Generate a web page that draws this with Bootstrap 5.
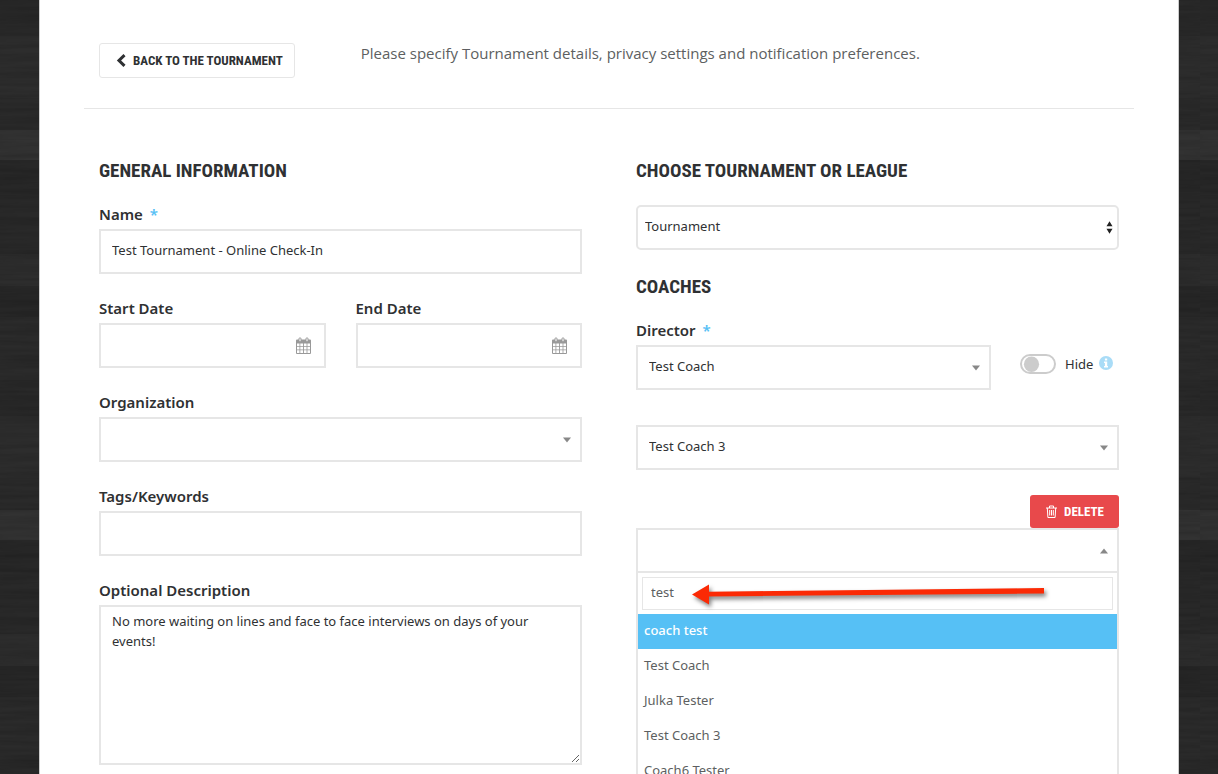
<!DOCTYPE html>
<html lang="en">
<head>
<meta charset="utf-8">
<meta name="viewport" content="width=device-width, initial-scale=1">
<title>Tournament settings</title>
<link rel="stylesheet" href="https://cdn.jsdelivr.net/npm/bootstrap@5.3.0/dist/css/bootstrap.min.css">
<style>
  :root { --ink: #2f3133; --line: #e6e6e6; --sky: #56c0f5; --danger: #e8494b; }
  html { scrollbar-width: none; }
  body {
    font-family: "Noto Sans", sans-serif; font-size: 13px; line-height: 20px; color: var(--ink);
    background-color: #272727;
    background-image:
      url("data:image/svg+xml,%3Csvg xmlns='http://www.w3.org/2000/svg' width='400' height='400'%3E%3Cfilter id='g'%3E%3CfeTurbulence type='fractalNoise' baseFrequency='.012 .22' numOctaves='3' stitchTiles='stitch'/%3E%3CfeColorMatrix values='0 0 0 0 0 0 0 0 0 0 0 0 0 0 0 .8 0 0 0 -.22'/%3E%3C/filter%3E%3Crect width='400' height='400' filter='url(%23g)' opacity='.3'/%3E%3C/svg%3E"),
      linear-gradient(#292929 0 36px, #2d2d2d 36px 98px, #2a2a2a 98px 130px, #323232 130px 160px, #272727 160px 192px, #292929 192px 254px, #2d2d2d 254px 286px, #272727 286px 317px, #2b2b2b 317px 380px);
    background-size: 400px 400px, 100% 380px;
  }
  .sheet { background: #fff; min-height: 100vh; padding: 43px 44px 40px; border-left: 1px solid #ccc; border-right: 1px solid #ccc; }
  .intro { padding: 0 15px 30px; border-bottom: 1px solid var(--line); margin-bottom: 47px; }
  .intro p { font-family: "Open Sans", "Noto Sans", sans-serif; font-size: 15px; color: #5d5f61; margin-left: 66px; }
  .poster { font-family: "Roboto Condensed", Roboto, sans-serif; font-weight: 700; text-transform: uppercase; }
  h2.poster { font-size: 19px; line-height: 30px; margin: 0 0 19px; }
  .btn.poster { font-size: 13px; line-height: 19px; border-radius: 3px; padding: 7px 11px 7px 16px; gap: 7px; }
  .btn-back { border: 1px solid var(--line); color: var(--ink); }
  .btn.btn-del { background: var(--danger); color: #fff; padding-right: 15px; }
  .cols { padding: 0 15px; }
  .cols > .row { --bs-gutter-x: 54px; }
  .row.pair { --bs-gutter-x: 30px; }
  .field { margin-bottom: 25px; }
  .field > label, .field-label { display: block; font-size: 15px; font-weight: 600; line-height: 18px; padding-bottom: 6px; }
  .req { color: var(--sky); margin-left: 3px; }
  .form-control.box, .form-select.box {
    font-size: 13px; line-height: 20px; color: var(--ink); height: 45px; border: 2px solid var(--line);
    border-radius: 0; padding: 8px 11px 12px; background-color: #fff;
  }
  .form-select.box {
    padding: 8px 30px 12px 11px; background-size: 8px 6px; background-position: right 9px top 18px;
    background-image: url("data:image/svg+xml,%3Csvg xmlns='http://www.w3.org/2000/svg' viewBox='0 0 8 6'%3E%3Cpath d='M0 .5h8L4 5.5z' fill='%23888'/%3E%3C/svg%3E");
  }
  .form-select.opened { text-align: left; background-image: url("data:image/svg+xml,%3Csvg xmlns='http://www.w3.org/2000/svg' viewBox='0 0 8 6'%3E%3Cpath d='M0 5.5h8L4 .5z' fill='%23888'/%3E%3C/svg%3E"); }
  .form-select.native {
    border-radius: 5px; padding-left: 7px; background-size: 7px 13px; background-position: right 4px top 14px; margin-bottom: 22px;
    background-image: url("data:image/svg+xml,%3Csvg xmlns='http://www.w3.org/2000/svg' viewBox='0 0 7 13'%3E%3Cpath d='M.5 5.3h6L3.500 .3zM.5 7.700h6l-3 5z' fill='%23222'/%3E%3C/svg%3E");
  }
  .form-control.area { height: 160px; padding: 4px 11px; }
  .cal { position: absolute; right: 15px; top: 14px; pointer-events: none; }
  .director { width: 355px; max-width: 74%; }
  .second { margin-top: 35px; }
  .remove-row { padding-top: 25px; }
  .toggle .form-check-input { width: 36px; height: 20px; margin: 0; border: 2px solid #ccc; background-size: 19px; flex: none;
    background-image: url("data:image/svg+xml,%3Csvg xmlns='http://www.w3.org/2000/svg' viewBox='-4 -4 8 8'%3E%3Ccircle r='3.2' fill='%23ccc'/%3E%3C/svg%3E"); }
  .toggle { padding: 9px 0 0 29px; height: 45px; }
  .toggle label { margin: 0 6px 0 9px; }
  .toggle svg { margin-top: 2px; }
  .results { border: 2px solid var(--line); border-top: 0; }
  .find { padding: 4px; }
  .find .form-control { height: 33px; font-size: 13px; color: #5d5f61; border: 1px solid var(--line); border-radius: 0; padding: 4px 8px 8px; }
  .results .list-group-item { border: 0; padding: 6px 6px 9px; color: #5d5f61; line-height: 20px; }
  .results .list-group-item.active { background: var(--sky); color: #fff; font-weight: 500; }
  .pointer { position: absolute; left: 54px; top: 7px; pointer-events: none; filter: drop-shadow(2px 3px 2px rgba(0,0,0,.5)); }
</style>
</head>
<body>
<main class="container-xl sheet">
  <header class="intro d-flex align-items-start">
    <a href="#" class="btn poster btn-back d-flex align-items-center">
      <svg width="10" height="13" viewBox="0 0 10 13" fill="none" stroke="currentColor" stroke-width="3"><path d="M8.500 1.200 3 6.500l5.500 5.300"/></svg>
      Back to the tournament
    </a>
    <p class="mb-0">Please specify Tournament details, privacy settings and notification preferences.</p>
  </header>

  <div class="cols">
  <form class="row">
    <section class="col-6">
      <h2 class="poster">General information</h2>
      <div class="field">
        <label for="name">Name <span class="req">*</span></label>
        <input id="name" class="form-control box" value="Test Tournament - Online Check-In">
      </div>
      <div class="row pair">
        <div class="col-6 field">
          <label for="start">Start Date</label>
          <div class="position-relative">
            <input id="start" class="form-control box">
            <svg class="cal" width="15" height="17" viewBox="0 0 15 17"><path fill="#999" d="M1 2.500h13a1 1 0 0 1 1 1v12.500a1 1 0 0 1-1 1H1a1 1 0 0 1-1-1V3.500a1 1 0 0 1 1-1z"/><path fill="#fff" d="M1 6.500h2.500v2.500H1zM4.300 6.500h2.700v2.500H4.300zM7.900 6.500h2.700v2.500H7.900zM11.400 6.500H14v2.500h-2.600zM1 9.800h2.500v2.700H1zM4.300 9.800h2.700v2.700H4.300zM7.900 9.800h2.700v2.700H7.900zM11.400 9.800H14v2.700h-2.600zM1 13.300h2.500V16H1zM4.300 13.300h2.700V16H4.300zM7.900 13.300h2.700V16H7.900zM11.400 13.300H14V16h-2.600z"/><g fill="#fff" stroke="#999"><rect x="3" y=".8" width="2" height="4" rx="1"/><rect x="10" y=".8" width="2" height="4" rx="1"/></g></svg>
          </div>
        </div>
        <div class="col-6 field">
          <label for="end">End Date</label>
          <div class="position-relative">
            <input id="end" class="form-control box">
            <svg class="cal" width="15" height="17" viewBox="0 0 15 17"><path fill="#999" d="M1 2.500h13a1 1 0 0 1 1 1v12.500a1 1 0 0 1-1 1H1a1 1 0 0 1-1-1V3.500a1 1 0 0 1 1-1z"/><path fill="#fff" d="M1 6.500h2.500v2.500H1zM4.300 6.500h2.700v2.500H4.300zM7.900 6.500h2.700v2.500H7.900zM11.400 6.500H14v2.500h-2.600zM1 9.800h2.500v2.700H1zM4.300 9.800h2.700v2.700H4.300zM7.900 9.800h2.700v2.700H7.900zM11.400 9.800H14v2.700h-2.600zM1 13.300h2.500V16H1zM4.300 13.300h2.700V16H4.300zM7.900 13.300h2.700V16H7.900zM11.400 13.300H14V16h-2.600z"/><g fill="#fff" stroke="#999"><rect x="3" y=".8" width="2" height="4" rx="1"/><rect x="10" y=".8" width="2" height="4" rx="1"/></g></svg>
          </div>
        </div>
      </div>
      <div class="field">
        <label for="org">Organization</label>
        <select id="org" class="form-select box"><option></option></select>
      </div>
      <div class="field">
        <label for="tags">Tags/Keywords</label>
        <input id="tags" class="form-control box">
      </div>
      <div>
        <label class="field-label" for="desc">Optional Description</label>
        <textarea id="desc" class="form-control box area">No more waiting on lines and face to face interviews on days of your events!</textarea>
      </div>
    </section>

    <section class="col-6">
      <h2 class="poster">Choose tournament or league</h2>
      <select class="form-select box native" aria-label="Tournament or league"><option>Tournament</option></select>
      <h2 class="poster">Coaches</h2>
      <label class="field-label" for="director">Director <span class="req">*</span></label>
      <div class="d-flex">
        <select id="director" class="form-select box director"><option>Test Coach</option></select>
        <div class="toggle d-flex align-items-start form-switch">
          <input class="form-check-input" type="checkbox" role="switch" id="hide">
          <label for="hide">Hide</label>
          <svg width="14" height="14" viewBox="0 0 14 14"><circle cx="7" cy="7" r="7" fill="#a9dcf7"/><path fill="#fff" d="M5.900 2.500h2.300v2H5.900zM5 5.500h3.200v4.500H9v1.500H5V10h.9V7H5z"/></svg>
        </div>
      </div>
      <select class="form-select box second" aria-label="Coach"><option>Test Coach 3</option></select>
      <div class="d-flex justify-content-end remove-row">
        <button type="button" class="btn poster btn-del border-0 d-flex align-items-center">
          <svg width="11" height="13" viewBox="0 0 11 13" fill="none" stroke="currentColor"><path d="M0 3h11M3.500 3V1h4v2M1.300 3l.6 9.500h7.200l.6-9.500M3.700 5v5.500M5.500 5v5.500M7.300 5v5.500"/></svg>
          Delete
        </button>
      </div>
      <button type="button" class="form-select box opened" aria-expanded="true" aria-label="Choose a coach"></button>
      <div class="results position-relative">
        <div class="find"><input class="form-control" value="test" aria-label="Search coaches"></div>
        <div class="list-group list-group-flush">
          <a href="#" class="list-group-item active">coach test</a>
          <a href="#" class="list-group-item">Test Coach</a>
          <a href="#" class="list-group-item">Julka Tester</a>
          <a href="#" class="list-group-item">Test Coach 3</a>
          <a href="#" class="list-group-item">Coach6 Tester</a>
        </div>
        <svg class="pointer" width="360" height="28" viewBox="0 0 360 28"><path fill="#fb2a05" d="M0 14.500 17 4.500v7.200L352 8v5.500L17 16.500v8z"/></svg>
      </div>
    </section>
  </form>
  </div>
</main>
<script src="https://cdn.jsdelivr.net/npm/bootstrap@5.3.0/dist/js/bootstrap.bundle.min.js"></script>
</body>
</html>
